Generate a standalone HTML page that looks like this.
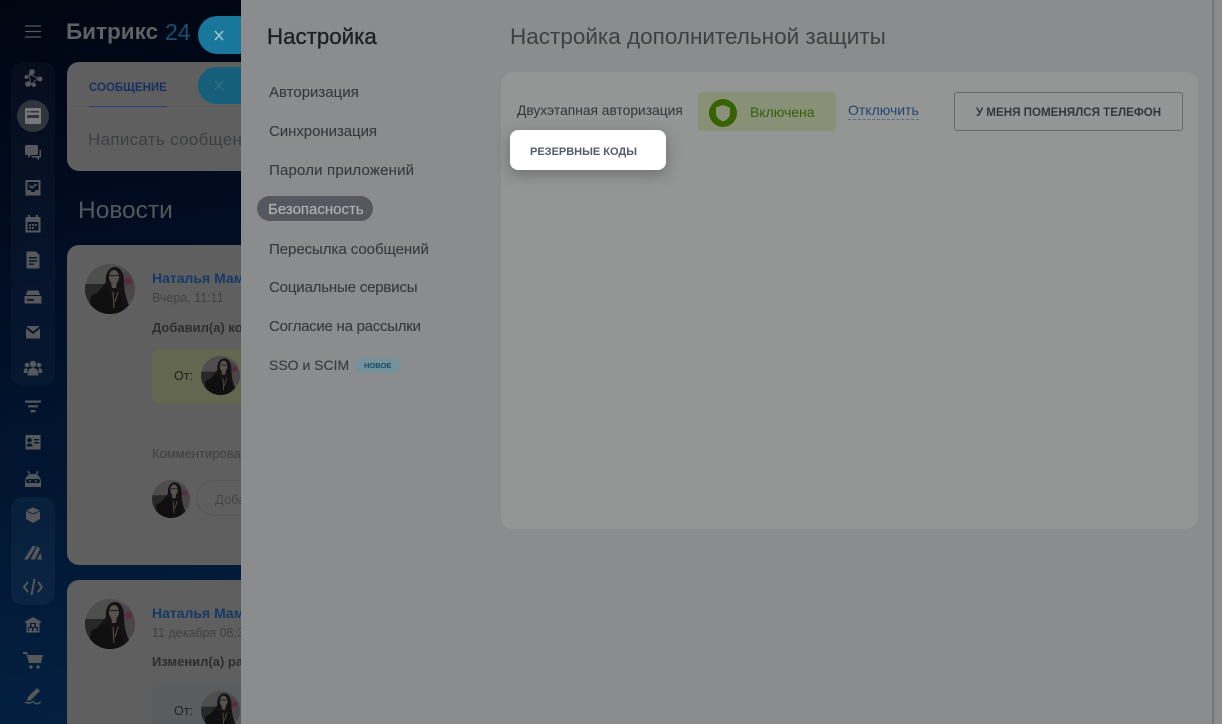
<!DOCTYPE html>
<html lang="ru"><head><meta charset="utf-8"><title>Настройка</title>
<style>
html,body{margin:0;padding:0;width:1222px;height:724px;overflow:hidden;background:#01102a}
body{position:relative;font-family:"Liberation Sans","Noto Sans CJK SC",sans-serif}
.a{position:absolute;white-space:nowrap}
#bg{left:0;top:0;width:1222px;height:724px;background:linear-gradient(170deg,#000511 0%,#010f27 35%,#031f3f 75%,#032244 100%)}
.card{position:absolute;left:67px;width:190px;background:#5f5f5f;border-radius:12px}
.nav{position:absolute;left:269px;font-size:15px;color:#36393d;white-space:nowrap;line-height:20px;-webkit-text-stroke:.12px #36393d}
svg.i{position:absolute;left:22px;width:22px;height:22px;fill:#55575b}
.av{position:absolute}
#panel{left:241px;top:0;width:981px;height:724px;background:#8b8c8e}
#inner{left:501px;top:72px;width:697px;height:457px;background:#949595;border-radius:12px}
</style></head><body>
<svg width="0" height="0" style="position:absolute"><defs>
<clipPath id="c"><circle cx="25" cy="25" r="25"/></clipPath>
<symbol id="ava" viewBox="0 0 50 50"><g clip-path="url(#c)"><rect width="50" height="50" fill="#4e4e4e"/><rect x="0" y="20" width="20" height="30" fill="#282828"/><rect x="38" y="8" width="12" height="28" fill="#4a4648"/><circle cx="43" cy="17" r="3.500" fill="#5c2a40"/><path d="M21 18c-1-10 4-15 9-15s9 5 9 14 2 18 5 24l-8 9H12l-4-8 5-14z" fill="#131313"/><ellipse cx="29" cy="13" rx="5" ry="7" fill="#5a524c"/><path d="M24 11.500h10" stroke="#1b2623" stroke-width="1.300"/><path d="M26 18h6l-1 6h-4z" fill="#564e49"/><path d="M4 50l2-18 14-7 5 3 3 8 4-8 5 5 3 17z" fill="#0f0f0f"/><path d="M28 28l1 16M33 28l-3 10" stroke="#625640" stroke-width="1"/></g></symbol>
</defs></svg>
<div id="bg" class="a"></div>

<!-- Left chrome -->
<svg class="a" style="left:25px;top:25px" width="16" height="13"><path d="M0 1h16M0 6.500h16M0 12h16" stroke="#585a5e" stroke-width="1.300"/></svg>
<div class="a" style="left:66px;top:17px;font-size:22.500px;font-weight:700;color:#5f6163;line-height:30px">Битрикс</div>
<div class="a" style="left:165px;top:17px;font-size:23px;color:#175170;line-height:30px">24</div>
<div class="a" style="left:198px;top:16px;width:60px;height:38px;border-radius:19px;background:#18779b"></div>
<svg class="a" style="left:214px;top:30px" width="10" height="11"><path d="M1 1l8 9M9 1l-8 9" stroke="#a3c3d0" stroke-width="1.500"/></svg>

<div class="a" style="left:11px;top:62px;width:44px;height:324px;background:rgba(120,140,170,.05);border-radius:12px"></div>
<div class="a" style="left:11px;top:497px;width:44px;height:108px;background:rgba(120,150,190,.07);border-radius:12px"></div>
<div class="a" style="left:17px;top:100px;width:32px;height:32px;border-radius:50%;background:#30353c"></div>

<svg class="i" style="top:68px" viewBox="0 0 22 22"><circle cx="10" cy="4" r="2.800"/><circle cx="18" cy="11" r="2.500"/><circle cx="6" cy="16" r="2.800"/><circle cx="4.500" cy="9" r="2"/><circle cx="12" cy="17" r="2"/><path d="M7 6l9 4-7 7z" fill="none" stroke="#55575b" stroke-width="1"/></svg>
<svg class="i" style="top:105px" viewBox="0 0 22 22"><path d="M4 3h14a1 1 0 0 1 1 1v14a1 1 0 0 1-1 1H4a1 1 0 0 1-1-1V4a1 1 0 0 1 1-1z" fill="#77787a"/><path d="M5 6h2v1.500H5zM8 6h9v1.500H8z" fill="#30353c"/><rect x="5" y="10" width="12" height="3" fill="#30353c"/></svg>
<svg class="i" style="top:142px" viewBox="0 0 22 22"><path d="M4 3h11a1 1 0 0 1 1 1v8a1 1 0 0 1-1 1H9l-3 3v-3H4a1 1 0 0 1-1-1V4a1 1 0 0 1 1-1z"/><path d="M17.500 8H19v7.500h-2v3l-3-3H9.500V14h8z"/></svg>
<svg class="i" style="top:177px" viewBox="0 0 22 22"><path fill-rule="evenodd" d="M3.500 3h15v15.500h-15zM5.500 5v8h3l1 2h3l1-2h3V5z"/><path d="M7.500 8.500l2.500 2.500 4.500-4" fill="none" stroke="#55575b" stroke-width="1.700"/></svg>
<svg class="i" style="top:213px" viewBox="0 0 22 22"><path fill-rule="evenodd" d="M3.500 4H6V2h2v2h6V2h2v2h2.500v15.500h-15zM5.500 9v8.500h11V9z"/><path d="M7 11h2v2H7zM10 11h2v2h-2zM13 11h2v2h-2zM7 14h2v2H7zM10 14h2v2h-2z"/></svg>
<svg class="i" style="top:249px" viewBox="0 0 22 22"><path fill-rule="evenodd" d="M4.500 2.500H14l3.500 3.500v13.500h-13zM7 8v1.400h8V8zM7 11.300v1.400h8v-1.400zM7 14.500v1.400h5v-1.400z"/></svg>
<svg class="i" style="top:286px" viewBox="0 0 22 22"><path d="M5.500 4.500h11l1.800 4.500H3.700z"/><path fill-rule="evenodd" d="M2.500 10h17v7.500h-17zM5 13v1.800h7V13z"/></svg>
<svg class="i" style="top:321px" viewBox="0 0 22 22"><path d="M4 5h14l-7 5.500z"/><path d="M4 7.500l7 5.500 7-5.500V17.500H4z"/></svg>
<svg class="i" style="top:358px" viewBox="0 0 22 22"><circle cx="11" cy="6" r="3.300"/><circle cx="5" cy="7" r="2.300"/><circle cx="17" cy="7" r="2.300"/><path d="M5.500 17.500l1-6 4.500-2 4.500 2 1 6z"/><path d="M1.500 15l.7-4 2.800-1 .7 5zM20.500 15l-.7-4-2.800-1-.7 5z"/></svg>
<svg class="i" style="top:396px" viewBox="0 0 22 22"><path d="M3 4.500h16v2.200H3zM6 9.200h10v2.200H6zM8.500 14h5v2.200h-5z"/></svg>
<svg class="i" style="top:431px" viewBox="0 0 22 22"><path fill-rule="evenodd" d="M3.500 4h15v14.500h-15zM10.500 15.500c0-2-1-3-3-3s-3 1-3 3zM7.500 7a2.200 2.200 0 1 0 .01 0zM12 8v1.400h5V8zM12 11v1.400h5V11z"/></svg>
<svg class="i" style="top:468px" viewBox="0 0 22 22"><path fill-rule="evenodd" d="M3 19v-5c0-5 3-8 8-8s8 3 8 8v5zM6 11a1 1 0 0 0 0 4h10a1 1 0 0 0 0-4z"/><path d="M6 3l2 4M16 3l-2 4" stroke="#55575b" stroke-width="1.400"/><circle cx="8" cy="13" r="1"/><circle cx="14" cy="13" r="1"/></svg>
<svg class="i" style="top:504px" viewBox="0 0 22 22"><path d="M11 3.500l7 3-7 3-7-3z"/><path d="M4 7.500l7 3 7-3V15l-7 4-7-4z"/></svg>
<svg class="i" style="top:541px" viewBox="0 0 22 22"><path d="M2 18.500L10.500 5h3.500L6 18.500zM8.500 18.500L15.500 5l2.500 3-5 10.500zM15 18.500l3.500-7 1.500 7z"/></svg>
<svg class="i" style="top:576px" viewBox="0 0 22 22"><path d="M6 6l-4 5 4 5M16 6l4 5-4 5M12.500 3l-3 16" fill="none" stroke="#55575b" stroke-width="2"/></svg>
<svg class="i" style="top:614px" viewBox="0 0 22 22"><path fill-rule="evenodd" d="M11 3l8 4.500V9h-1.500v9.500h-13V9H3V7.500zM8 9v4H6v4h10v-4h-2V9z"/><rect x="7" y="14" width="3" height="3"/><rect x="11.500" y="14" width="3" height="3"/><rect x="9.500" y="10" width="3" height="3"/></svg>
<svg class="i" style="top:650px" viewBox="0 0 22 22"><path d="M1 2h4l1 3h15l-2 8H7L4.500 4H1z"/><circle cx="9" cy="17" r="1.700"/><circle cx="16" cy="17" r="1.700"/></svg>
<svg class="i" style="top:686px" viewBox="0 0 22 22"><path d="M15 2l3 3-9 9-4 1 1-4z"/><path d="M3 17c2-2 3 1 5 0s3-2 5 0 3 0 6-1" fill="none" stroke="#55575b" stroke-width="1.400"/></svg>

<!-- Feed behind -->
<div class="card" style="top:62px;height:109px"></div>
<div class="a" style="left:67px;top:106px;width:174px;height:1px;background:#5a5a5a"></div>
<div class="a" style="left:89px;top:81px;font-size:11.500px;font-weight:700;color:#163160;line-height:15px">СООБЩЕНИЕ</div>
<div class="a" style="left:89px;top:106px;width:78px;height:1px;background:#254175"></div>
<div class="a" style="left:198px;top:67px;width:60px;height:37px;border-radius:19px;background:#165f7a"></div>
<svg class="a" style="left:214px;top:80px" width="10" height="11"><path d="M1 1l8 9M9 1l-8 9" stroke="#346c80" stroke-width="1.500"/></svg>
<div class="a" style="left:88px;top:129px;font-size:17px;color:#3c3e40;letter-spacing:.3px;line-height:21px;width:153px;overflow:hidden">Написать сообщение</div>
<div class="a" style="left:78px;top:194px;font-size:24.500px;color:#55575a;line-height:33px">Новости</div>

<div class="card" style="top:245px;height:320px"></div>
<svg class="av" style="left:85px;top:264px" width="50" height="50"><use href="#ava"/></svg>
<div class="a" style="left:152px;top:270px;font-size:14px;font-weight:700;color:#143a66;line-height:17px;width:89px;overflow:hidden">Наталья Мамонтова</div>
<div class="a" style="left:152px;top:290px;font-size:12.500px;color:#3f4143;line-height:16px">Вчера, 11:11</div>
<div class="a" style="left:152px;top:319px;font-size:13px;font-weight:700;color:#2c2d2f;line-height:17px;width:89px;overflow:hidden">Добавил(а) комментарий</div>
<div class="a" style="left:152px;top:349px;width:100px;height:55px;border-radius:8px;background:#64674f"></div>
<div class="a" style="left:174px;top:368px;font-size:12.500px;color:#1f2021;line-height:16px">От:</div>
<svg class="av" style="left:201px;top:356px" width="39" height="39"><use href="#ava"/></svg>
<div class="a" style="left:152px;top:445px;font-size:13px;color:#3c3e40;line-height:17px;width:89px;overflow:hidden">Комментировать</div>
<svg class="av" style="left:152px;top:480px" width="38" height="38"><use href="#ava"/></svg>
<div class="a" style="left:196px;top:480px;width:70px;height:36px;box-sizing:border-box;border:1px solid #555658;border-radius:18px"></div>
<div class="a" style="left:215px;top:491px;font-size:13px;color:#444547;line-height:17px;width:26px;overflow:hidden">Добавить</div>

<div class="card" style="top:580px;height:160px"></div>
<svg class="av" style="left:85px;top:599px" width="50" height="50"><use href="#ava"/></svg>
<div class="a" style="left:152px;top:605px;font-size:14px;font-weight:700;color:#143a66;line-height:17px;width:89px;overflow:hidden">Наталья Мамонтова</div>
<div class="a" style="left:152px;top:625px;font-size:12.500px;color:#3f4143;line-height:16px;width:89px;overflow:hidden">11 декабря 08:30</div>
<div class="a" style="left:152px;top:653px;font-size:13px;font-weight:700;color:#2c2d2f;line-height:17px;width:89px;overflow:hidden">Изменил(а) расписание</div>
<div class="a" style="left:152px;top:684px;width:100px;height:60px;border-radius:8px;background:#595d5f"></div>
<div class="a" style="left:174px;top:703px;font-size:12.500px;color:#1f2021;line-height:16px">От:</div>
<svg class="av" style="left:201px;top:691px" width="39" height="39"><use href="#ava"/></svg>

<!-- Slider panel -->
<div id="panel" class="a"></div>
<div class="a" style="left:1212px;top:0;width:2px;height:724px;background:#757678"></div>
<div id="inner" class="a"></div>

<div class="a" style="left:267px;top:23px;font-size:22.300px;color:#1e1f22;line-height:28px;-webkit-text-stroke:.35px #1e1f22">Настройка</div>
<div class="a" style="left:510px;top:23px;font-size:22.500px;color:#3c3f43;line-height:28px">Настройка дополнительной защиты</div>

<div class="nav" style="top:83px">Авторизация</div>
<div class="nav" style="top:122px;letter-spacing:-.05px">Синхронизация</div>
<div class="nav" style="top:161px;letter-spacing:.18px">Пароли приложений</div>
<div class="a" style="left:257px;top:196px;width:116px;height:25px;border-radius:13px;background:#55585e"></div>
<div class="nav" style="top:200px;left:268px;color:#aeb0b2;-webkit-text-stroke:.2px #aeb0b2">Безопасность</div>
<div class="nav" style="top:240px;letter-spacing:-.05px">Пересылка сообщений</div>
<div class="nav" style="top:278px;letter-spacing:-.17px">Социальные сервисы</div>
<div class="nav" style="top:317px;letter-spacing:-.25px">Согласие на рассылки</div>
<div class="nav" style="top:355px;font-size:14px">SSO и SCIM</div>
<div class="a" style="left:355px;top:358px;width:46px;height:15px;border-radius:8px;background:#75919c"></div>
<div class="a" style="left:364px;top:360px;font-size:7.500px;font-weight:700;color:#144a64;line-height:11px">НОВОЕ</div>

<div class="a" style="left:517px;top:102px;font-size:13.800px;color:#333539;line-height:18px">Двухэтапная авторизация</div>
<div class="a" style="left:698px;top:92px;width:138px;height:39px;border-radius:4px;background:#889178"></div>
<div class="a" style="left:709px;top:99px;width:28px;height:28px;border-radius:50%;background:#376200"></div>
<svg class="a" style="left:715px;top:104px" width="16" height="18" viewBox="0 0 16 18"><path d="M8 1l7 2.500v6c0 4-3.500 6.500-7 8-3.500-1.500-7-4-7-8v-6z" fill="#889178"/></svg>
<div class="a" style="left:750px;top:103px;font-size:14px;color:#345e0a;line-height:18px">Включена</div>
<div class="a" style="left:848px;top:102px;font-size:14px;color:#224470;line-height:17px;border-bottom:1px dashed #4f6f98">Отключить</div>

<div class="a" style="left:954px;top:92px;width:229px;height:39px;box-sizing:border-box;border:1px solid #67696c;border-radius:3px;text-align:center;font-size:11.600px;font-weight:700;color:#33373e;line-height:39px">У МЕНЯ ПОМЕНЯЛСЯ ТЕЛЕФОН</div>

<div class="a" style="left:510px;top:130px;width:156px;height:40px;background:#fff;border-radius:8px;box-shadow:0 4px 14px rgba(40,40,40,.35)"></div>
<div class="a" style="left:530px;top:145px;font-size:11px;font-weight:700;color:#535c69;line-height:15px">РЕЗЕРВНЫЕ КОДЫ</div>
</body></html>
